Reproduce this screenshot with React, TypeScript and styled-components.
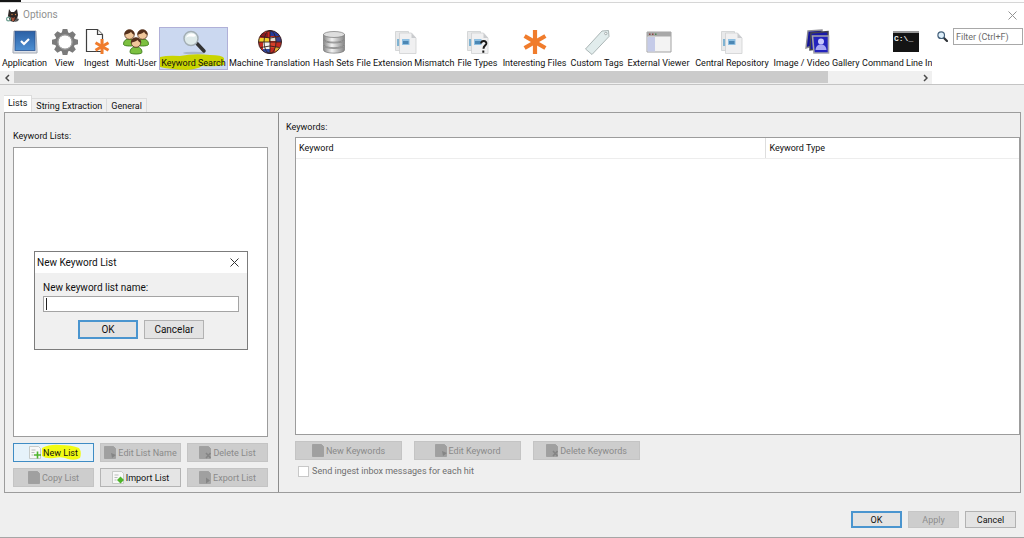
import React from "react";
import styled, { createGlobalStyle, css } from "styled-components";

const Global = createGlobalStyle`
  *, *::before, *::after { box-sizing: border-box; }
  body { margin: 0; background: #efefef; }
  body, button, input, table {
    font-family: Roboto, Tahoma, sans-serif;
    font-size: 9px;
    line-height: 12px;
    color: #111;
  }
  button { padding: 0; }
`;

const Window = styled.div`
  display: flex;
  flex-direction: column;
  min-height: 100vh;
  background: #efefef;
  border-bottom: 1px solid #a6a6a6;
`;

/* ---------- title bar ---------- */

const TopEdge = styled.div`
  display: flex;
  height: 3px;
  background: #fdfdfd;
  border-bottom: 1px solid #d6d6d6;
`;
const TopEdgeDark = styled.span`
  width: 21px;
  height: 2px;
  background: #151515;
`;
const TitleBar = styled.header`
  display: flex;
  align-items: center;
  height: 24px;
  padding: 0 6px;
  background: #fff;
`;
const Title = styled.h1`
  flex: 1;
  margin: 0 0 0 4px;
  font-size: 10px;
  font-weight: 400;
  color: #909090;
`;
const CloseButton = styled.button<{ $strong?: boolean }>`
  display: grid;
  place-items: center;
  width: 11px;
  height: 11px;
  border: 0;
  background: none;
  color: ${(p) => (p.$strong ? "#333" : "#929292")};
`;

/* ---------- category toolbar ---------- */

const Toolbar = styled.div`
  display: flex;
  background: #fff;
  border-bottom: 1px solid #c4c4c4;
`;
const Scroller = styled.div`
  flex: 1;
  min-width: 0;
`;
const Categories = styled.nav`
  display: flex;
  height: 44px;
  overflow: hidden;
`;
const Category = styled.button<{ $width: number; $active?: boolean }>`
  position: relative;
  flex: none;
  display: flex;
  flex-direction: column;
  align-items: center;
  justify-content: space-between;
  width: ${(p) => p.$width}px;
  height: 43px;
  border: 1px solid ${(p) => (p.$active ? "#b0b0d8" : "transparent")};
  background: ${(p) => (p.$active ? "#cbd8f0" : "none")};
  white-space: nowrap;
  svg { flex: none; }
`;
const CategoryLabel = styled.span`
  position: relative;
`;
const Marker = styled.svg`
  position: absolute;
  left: 0;
  bottom: -1px;
`;
const ScrollBar = styled.div`
  display: flex;
  height: 13px;
  background: #f0f0f0;
`;
const ScrollArrow = styled.button`
  display: grid;
  place-items: center;
  width: 14px;
  height: 13px;
  border: 0;
  background: #f0f0f0;
  color: #4a4a4a;
`;
const ScrollTrack = styled.div`
  flex: 1;
`;
const ScrollThumb = styled.div`
  width: 90%;
  height: 12px;
  background: #cbcbcb;
`;
const Search = styled.label`
  display: flex;
  align-items: flex-start;
  gap: 5px;
  padding: 1px 1px 0 5px;
  svg { margin-top: 3px; }
`;
const FilterInput = styled.input`
  width: 70px;
  height: 17px;
  padding: 0 2px;
  border: 1px solid #a8a8a8;
  background: #fff;
  font-size: 9px;
  &::placeholder { color: #6c6c6c; opacity: 1; }
`;

/* ---------- tabs and panes ---------- */

const Body = styled.main`
  flex: 1;
  display: flex;
  flex-direction: column;
  padding: 10px 3px 0 4px;
`;
const Tabs = styled.div`
  display: flex;
  align-items: flex-end;
`;
const Tab = styled.button<{ $active?: boolean }>`
  height: 14px;
  padding: 0 4px;
  border: 1px solid #dcdcdc;
  border-width: 1px 1px 0 0;
  background: #f0f0f0;
  ${(p) =>
    p.$active &&
    css`
      height: 17px;
      padding-bottom: 3px;
      background: #fff;
    `}
`;
const Panes = styled.div`
  flex: 1;
  display: grid;
  grid-template-columns: minmax(0, 27fr) minmax(0, 73fr);
  border: 1px solid #9c9c9c;
`;
const ListsPane = styled.section`
  display: flex;
  flex-direction: column;
  padding: 17px 10px 5px 8px;
  border-right: 1px solid #8c8c8c;
`;
const PaneTitle = styled.h2`
  margin: 0;
  font-size: 9px;
  font-weight: 400;
`;
const ListBox = styled.div`
  position: relative;
  flex: 1;
  min-height: 200px;
  margin: 5px 0 6px;
  border: 1px solid #9c9c9c;
  background: #fff;
`;
const ListActions = styled.div`
  display: grid;
  grid-template-columns: repeat(3, minmax(0, 1fr));
  gap: 6px;
`;
const ActionButton = styled.button<{ $focus?: boolean }>`
  position: relative;
  display: flex;
  align-items: center;
  justify-content: center;
  gap: 2px;
  height: 19px;
  border: 1px solid #b4b4b4;
  background: #e5e5e5;
  white-space: nowrap;
  svg { flex: none; }
  &:disabled {
    border-color: #c4c4c4;
    background: #cdcdcd;
    color: #8a8a8a;
  }
  ${(p) =>
    p.$focus &&
    css`
      border-color: #3f8cc4;
      background: #e6f2fa;
    `}
`;
const ActionLabel = styled.span`
  position: relative;
`;
const ActionMarker = styled.svg`
  position: absolute;
  left: 27px;
  top: 0;
`;

const KeywordsPane = styled.section`
  display: flex;
  flex-direction: column;
  padding: 8px 0 15px 7px;
`;
const KeywordsContent = styled.div`
  flex: 1;
  display: flex;
  flex-direction: column;
  margin: 4px 0 0 9px;
`;
const TableFrame = styled.div`
  flex: 1;
  border: 1px solid #9c9c9c;
  background: #fff;
`;
const Table = styled.table`
  width: 100%;
  border-collapse: collapse;
  table-layout: fixed;
  th {
    height: 20px;
    padding: 0 3px;
    border-bottom: 1px solid #ededed;
    text-align: left;
    font-weight: 400;
  }
  th:first-child {
    width: 65%;
    border-right: 1px solid #dedede;
  }
`;
const KeywordActions = styled.div`
  display: grid;
  grid-template-columns: repeat(3, 107px);
  gap: 12px;
  margin: 6px 0 5px;
`;
const CheckRow = styled.label`
  display: flex;
  align-items: center;
  gap: 3px;
  padding-left: 3px;
  color: #6e6e6e;
`;
const CheckBox = styled.input`
  appearance: none;
  width: 11px;
  height: 11px;
  margin: 0;
  border: 1px solid #c8c8c8;
  background: #fff;
`;

/* ---------- footer ---------- */

const Footer = styled.footer`
  display: flex;
  justify-content: flex-end;
  gap: 6px;
  padding: 18px 8px 9px;
`;
const PushButton = styled.button<{ $default?: boolean; $large?: boolean }>`
  width: ${(p) => (p.$large ? 60 : 51)}px;
  height: ${(p) => (p.$large ? 19 : 17)}px;
  border: ${(p) => (p.$default ? "2px solid #4a95cf" : "1px solid #b2b2b2")};
  background: #e3e3e3;
  line-height: 10px;
  font-size: ${(p) => (p.$large ? 10 : 9)}px;
  &:disabled {
    border-color: #c6c6c6;
    background: #cdcdcd;
    color: #8e8e8e;
  }
`;

/* ---------- new list dialog ---------- */

const Dialog = styled.div`
  position: absolute;
  top: 103px;
  left: 20px;
  right: 19px;
  border: 1px solid #7c7c7c;
  background: #f0f0f0;
  font-size: 10px;
`;
const DialogTitle = styled.div`
  display: flex;
  align-items: center;
  justify-content: space-between;
  height: 21px;
  padding: 0 7px 0 2px;
  background: #fff;
`;
const DialogBody = styled.form`
  display: flex;
  flex-direction: column;
  padding: 9px 8px 10px;
`;
const NameInput = styled.input`
  width: 100%;
  height: 16px;
  margin-top: 2px;
  padding: 0 3px;
  border: 1px solid #a4a4a4;
  background: linear-gradient(#222, #222) 2px 1px / 1px 12px no-repeat #fff;
`;
const DialogActions = styled.div`
  display: flex;
  justify-content: center;
  gap: 6px;
  margin-top: 8px;
`;

/* ---------- icons ---------- */

const Cross = ({ size = 9 }: { size?: number }) => (
  <svg width={size} height={size} viewBox="0 0 9 9" stroke="currentColor" fill="none">
    <path d="M.5 .5l8 8M8.5 .5l-8 8" />
  </svg>
);

const Chevron = ({ right }: { right?: boolean }) => (
  <svg width="5" height="8" viewBox="0 0 5 8" fill="none" stroke="currentColor" strokeWidth="1.5">
    <path d={right ? "M1 1l3 3-3 3" : "M4 1L1 4l3 3"} />
  </svg>
);

const DogIcon = () => (
  <svg width="13" height="13" viewBox="0 0 13 13">
    <path d="M3 0l2 3h3l3-3 1 6-1 4-3 3-4-1-2-5z" fill="#2e2624" />
    <path d="M5 8l2 1 2-1-1 4H6z" fill="#a8543a" />
    <circle cx="6" cy="5.500" r=".7" fill="#d98a4b" />
    <circle cx="9.500" cy="5.500" r=".7" fill="#d98a4b" />
    <circle cx="2.500" cy="10" r="1.900" fill="none" stroke="#6f9f92" strokeWidth="1.200" />
    <path d="M10 9l3 1-1 2-3 1z" fill="#555" />
  </svg>
);

const iconBox = { width: 28, height: 28, viewBox: "0 0 28 28" };

const ApplicationIcon = () => (
  <svg {...iconBox}>
    <defs>
      <linearGradient id="app" x2="0" y2="1">
        <stop stopColor="#2c61a6" />
        <stop offset="1" stopColor="#4d8fd2" />
      </linearGradient>
    </defs>
    <path d="M3 3h22l1 19v3H2v-3z" fill="#dde1e8" stroke="#a3a9b4" />
    <rect x="4" y="3.500" width="20" height="19" fill="url(#app)" stroke="#2a5390" strokeWidth=".8" />
    <path d="M10 13l3 3 5-5" fill="none" stroke="#fff" strokeWidth="2.200" />
  </svg>
);

const GearIcon = () => (
  <svg {...iconBox}>
    <g fill="#7b7b7b">
      {[0, 45, 90, 135].map((a) => (
        <path key={a} transform={`rotate(${a} 14 14)`} d="M11.700 1h4.600l1 4v18l-1 4h-4.600l-1-4V5z" />
      ))}
      <circle cx="14" cy="14" r="10" />
    </g>
    <circle cx="14" cy="14" r="6.700" fill="#fff" />
    <circle cx="14" cy="14" r="7.200" fill="none" stroke="#a8a8a8" />
  </svg>
);

const Star = ({ x, y, r, w }: { x: number; y: number; r: number; w: number }) => (
  <g stroke="#f07c2c" strokeWidth={w} fill="none">
    {[0, 60, 120].map((a) => (
      <path key={a} transform={`rotate(${a} ${x} ${y})`} d={`M${x} ${y - r}V${y + r}`} />
    ))}
  </g>
);

const IngestIcon = () => (
  <svg {...iconBox}>
    <path d="M3.500 1.500h11l5 5v17h-16z" fill="#fdfdfd" stroke="#3f3f3f" strokeWidth="1.200" />
    <path d="M14.500 1.500v5h5" fill="#eee" stroke="#3f3f3f" strokeWidth="1.200" />
    <Star x={19} y={18.5} r={7.5} w={3} />
  </svg>
);

const Person = ({ x, y }: { x: number; y: number }) => (
  <g transform={`translate(${x} ${y})`}>
    <path d="M-6 10c0-4 2.500-5.500 6-5.500s6 1.500 6 5.500c-1 2-11 2-12 0z" fill="#7cc040" stroke="#3c7a1c" strokeWidth=".9" />
    <circle r="4.800" fill="#f0c79b" stroke="#54301c" strokeWidth=".8" />
    <path d="M-5 .5C-5.500-6.500 5.500-6.500 5 .5 3-.5 2-1.800 1.500-2.500 0-1-3-.5-5 .5z" fill="#54301c" />
  </g>
);

const UsersIcon = () => (
  <svg {...iconBox}>
    <Person x={7.5} y={6.5} />
    <Person x={20.5} y={6.5} />
    <Person x={14} y={14.5} />
  </svg>
);

const MagnifierIcon = () => (
  <svg {...iconBox}>
    <ellipse cx="14" cy="25" rx="11" ry="1.300" fill="#a8b5cc" />
    <path d="M17 15.500l7 7.500" stroke="#333" strokeWidth="3.500" strokeLinecap="round" />
    <circle cx="11" cy="10.500" r="7" fill="#dfeaea" stroke="#a3aeb4" strokeWidth="1.500" />
    <path d="M6 10c1-5 8-6 10-2-3 2-7-1-10 2z" fill="#fff" />
  </svg>
);

const GlobeIcon = () => (
  <svg {...iconBox}>
    <defs>
      <clipPath id="globe"><circle cx="14" cy="14" r="11.500" /></clipPath>
    </defs>
    <g clipPath="url(#globe)">
      <path d="M0 0h28v28H0z" fill="#c32a22" />
      <path d="M14 2h12v6H14z" fill="#253a9c" />
      <path d="M2 10h11v4H2z" fill="#f2cf2d" />
      <path d="M7 14h7v7H7z" fill="#f2f2f2" />
      <path d="M7 21h7v6H7z" fill="#2f4aa6" />
      <path d="M14 9h7v4h-7z" fill="#e8ddd0" />
      <path d="M20 9h7v5h-7z" fill="#39428a" />
      <path d="M14 14h6v6h-6z" fill="#d8402a" />
      <path d="M19 19h6v6h-6z" fill="#e0a834" />
      <path d="M3 5h9v4H3z" fill="#8c1c22" />
    </g>
    <g fill="none" stroke="#33211f" strokeWidth=".9">
      <circle cx="14" cy="14" r="11.500" />
      <ellipse cx="14" cy="14" rx="6" ry="11.500" />
      <path d="M14 2.500v23M2.500 14h23M4.500 8.500q9.500 3 19 0M4.500 19.500q9.500-3 19 0" />
    </g>
  </svg>
);

const DatabaseIcon = () => (
  <svg {...iconBox}>
    <defs>
      <linearGradient id="db">
        <stop stopColor="#888" />
        <stop offset=".4" stopColor="#f2f2f2" />
        <stop offset="1" stopColor="#868686" />
      </linearGradient>
    </defs>
    {[17.5, 12, 6.5].map((y) => (
      <g key={y} stroke="#777" strokeWidth=".7">
        <path d={`M3.500 ${y}v4.500c0 4.200 21 4.200 21 0V${y}z`} fill="url(#db)" />
        <ellipse cx="14" cy={y} rx="10.500" ry="3" fill="#dedede" />
      </g>
    ))}
  </svg>
);

const FilesIcon = ({ question }: { question?: boolean }) => (
  <svg {...iconBox}>
    <path d="M3.500 3.500h13v19h-13z" fill="#e8e9ea" stroke="#cdcfd1" strokeWidth=".8" />
    <path d="M5 11h3v7H5z" fill="#7fb3d2" />
    <path d="M7.500 5h12l4.500 5v15.500H7.500z" fill="#f0f0f1" stroke="#cfd0d2" strokeWidth=".8" />
    <path d="M19.500 5v5H24z" fill="#c9cbce" />
    <path d="M10 11h7.500v6H10z" fill="#8fc0e2" />
    <path d="M11 13h5.500v3H11z" fill="#4c87b4" />
    {question && (
      <path d="M17 15.500c.3-3.500 5.700-3.200 5.300.2-.3 2-2.800 2-2.800 5M19.300 22.500v2.300" fill="none" stroke="#181818" strokeWidth="2" />
    )}
  </svg>
);

const InterestingIcon = () => (
  <svg {...iconBox}>
    <Star x={14} y={14} r={12} w={4.2} />
  </svg>
);

const TagIcon = () => (
  <svg {...iconBox}>
    <path d="M19 3l6.500-.5.5 6L9 26.500 2.500 21z" fill="#e1ecec" stroke="#a3aeae" strokeWidth=".9" />
    <circle cx="22.800" cy="5.500" r="1.200" fill="#fff" stroke="#8a9292" strokeWidth=".7" />
  </svg>
);

const ViewerIcon = () => (
  <svg {...iconBox}>
    <path d="M2 4h24v20H2z" fill="#f3f3f3" stroke="#a2a2a2" />
    <path d="M2 4h24v4.500H2z" fill="#a8a8a8" />
    <path d="M4 5.500h1.500v1.500H4zM7 5.500h1.500v1.500H7z" fill="#8b4444" />
    <path d="M10 5.500h1.500v1.500H10z" fill="#4c8650" />
    <path d="M2.500 9H10v14.500H2.500z" fill="#c5cbe8" />
  </svg>
);

const GalleryIcon = () => (
  <svg {...iconBox}>
    <path d="M5 3l14-1v13L3 20z" fill="#15159a" stroke="#8d8d93" strokeWidth="1.400" />
    <path d="M8 5l17-1.500v16L7 22z" fill="#1a1aa8" stroke="#44444c" strokeWidth="1.500" />
    <path d="M9.500 8h16v17H11z" fill="#2323bd" stroke="#a4a4aa" strokeWidth="1.600" />
    <circle cx="18" cy="13.500" r="3" fill="#c9c9fb" />
    <path d="M12.500 22c.5-4 2.500-5.500 5.500-5.500s5 1.500 5.500 5.500z" fill="#a9a9f4" />
  </svg>
);

const TerminalGlyph = styled.span`
  width: 26px;
  height: 21px;
  margin-top: 3px;
  padding: 2px 1px 0;
  border-top: 2px solid #9a9a9a;
  background: #141414;
  color: #eee;
  font: 700 8px/8px "Liberation Mono", monospace;
  text-align: left;
`;

const SearchIcon = () => (
  <svg width="11" height="11" viewBox="0 0 11 11">
    <path d="M6.500 6.500l3.500 3.500" stroke="#2f3338" strokeWidth="2.200" strokeLinecap="round" />
    <circle cx="4.200" cy="4.200" r="3.300" fill="#dff0fb" stroke="#46627c" strokeWidth="1.200" />
  </svg>
);

type DocKind = "plain" | "add" | "edit" | "remove" | "import" | "export";

const DocIcon = ({ kind, disabled }: { kind: DocKind; disabled?: boolean }) => {
  const ink = disabled ? "#858585" : "#4fb52c";
  return (
    <svg width="12" height="13" viewBox="0 0 12 13">
      <path d="M.5 .5h9l2 2v10H.5z" fill={disabled ? "#a0a0a0" : "#f8f8f8"} stroke={disabled ? "#9c9c9c" : "#bcc0bc"} strokeWidth=".8" />
      {!disabled && <path d="M2.500 4h4M2.500 6.500h3M2.500 9h2" stroke="#b9bdb9" />}
      {kind === "add" && <path d="M8.500 5.500v7M5 9h7" stroke={ink} strokeWidth="1.600" />}
      {kind === "edit" && <path d="M7 7l5 2-4 3z" fill={ink} />}
      {kind === "remove" && <path d="M7 7l4.500 5M11.500 7L7 12" stroke={ink} strokeWidth="1.600" />}
      {kind === "import" && <path d="M8.500 5.500l3.500 3.500-3.500 3.500L5 9z" fill={ink} />}
      {kind === "export" && <path d="M7 6.500l4 3-4 3z" fill={ink} />}
    </svg>
  );
};

/* ---------- data ---------- */

const categories: { label: string; width: number; icon: React.ReactNode; active?: boolean }[] = [
  { label: "Application", width: 49, icon: <ApplicationIcon /> },
  { label: "View", width: 31, icon: <GearIcon /> },
  { label: "Ingest", width: 33, icon: <IngestIcon /> },
  { label: "Multi-User", width: 46, icon: <UsersIcon /> },
  { label: "Keyword Search", width: 69, icon: <MagnifierIcon />, active: true },
  { label: "Machine Translation", width: 83, icon: <GlobeIcon /> },
  { label: "Hash Sets", width: 45, icon: <DatabaseIcon /> },
  { label: "File Extension Mismatch", width: 99, icon: <FilesIcon /> },
  { label: "File Types", width: 45, icon: <FilesIcon question /> },
  { label: "Interesting Files", width: 69, icon: <InterestingIcon /> },
  { label: "Custom Tags", width: 56, icon: <TagIcon /> },
  { label: "External Viewer", width: 67, icon: <ViewerIcon /> },
  { label: "Central Repository", width: 80, icon: <FilesIcon /> },
  { label: "Image / Video Gallery", width: 89, icon: <GalleryIcon /> },
  { label: "Command Line Ingest", width: 90, icon: <TerminalGlyph>C:\_</TerminalGlyph> },
];

const listActions: { label: string; kind: DocKind; enabled?: boolean; focus?: boolean }[] = [
  { label: "New List", kind: "add", enabled: true, focus: true },
  { label: "Edit List Name", kind: "edit" },
  { label: "Delete List", kind: "remove" },
  { label: "Copy List", kind: "plain" },
  { label: "Import List", kind: "import", enabled: true },
  { label: "Export List", kind: "export" },
];

const keywordActions: { label: string; kind: DocKind }[] = [
  { label: "New Keywords", kind: "plain" },
  { label: "Edit Keyword", kind: "edit" },
  { label: "Delete Keywords", kind: "remove" },
];

export default function App() {
  return (
    <Window>
      <Global />
      <TopEdge>
        <TopEdgeDark />
      </TopEdge>
      <TitleBar>
        <DogIcon />
        <Title>Options</Title>
        <CloseButton aria-label="Close">
          <Cross />
        </CloseButton>
      </TitleBar>

      <Toolbar>
        <Scroller>
          <Categories>
            {categories.map((c) => (
              <Category key={c.label} $width={c.width} $active={c.active}>
                {c.active && (
                  <Marker width="67" height="16" viewBox="0 0 67 16">
                    <path d="M0 3q8-2 20-1 14-3 30-1 12 0 14 3v7q-8 2-22 1-4 3-16 4-18-1-26-3z" fill="#c9d400" />
                  </Marker>
                )}
                {c.icon}
                <CategoryLabel>{c.label}</CategoryLabel>
              </Category>
            ))}
          </Categories>
          <ScrollBar>
            <ScrollArrow aria-label="Scroll left">
              <Chevron />
            </ScrollArrow>
            <ScrollTrack>
              <ScrollThumb />
            </ScrollTrack>
            <ScrollArrow aria-label="Scroll right">
              <Chevron right />
            </ScrollArrow>
          </ScrollBar>
        </Scroller>
        <Search>
          <SearchIcon />
          <FilterInput aria-label="Filter" placeholder="Filter (Ctrl+F)" />
        </Search>
      </Toolbar>

      <Body>
        <Tabs role="tablist">
          <Tab role="tab" aria-selected="true" $active>
            Lists
          </Tab>
          <Tab role="tab">String Extraction</Tab>
          <Tab role="tab">General</Tab>
        </Tabs>
        <Panes>
          <ListsPane>
            <PaneTitle>Keyword Lists:</PaneTitle>
            <ListBox>
              <Dialog role="dialog" aria-label="New Keyword List">
                <DialogTitle>
                  New Keyword List
                  <CloseButton aria-label="Close dialog" $strong>
                    <Cross />
                  </CloseButton>
                </DialogTitle>
                <DialogBody onSubmit={(e) => e.preventDefault()}>
                  <label htmlFor="list-name">New keyword list name:</label>
                  <NameInput id="list-name" type="text" />
                  <DialogActions>
                    <PushButton $default $large>
                      OK
                    </PushButton>
                    <PushButton type="button" $large>
                      Cancelar
                    </PushButton>
                  </DialogActions>
                </DialogBody>
              </Dialog>
            </ListBox>
            <ListActions>
              {listActions.map((a) => (
                <ActionButton key={a.label} disabled={!a.enabled} $focus={a.focus}>
                  {a.focus && (
                    <ActionMarker width="40" height="17" viewBox="0 0 40 17">
                      <path d="M1 4q8-4 18-3 12 0 19 3 3 4 1 10-5 3-12 1-6-3-14-1-8 1-12-2z" fill="#f2fb12" />
                    </ActionMarker>
                  )}
                  <DocIcon kind={a.kind} disabled={!a.enabled} />
                  <ActionLabel>{a.label}</ActionLabel>
                </ActionButton>
              ))}
            </ListActions>
          </ListsPane>
          <KeywordsPane>
            <PaneTitle>Keywords:</PaneTitle>
            <KeywordsContent>
              <TableFrame>
                <Table>
                  <thead>
                    <tr>
                      <th scope="col">Keyword</th>
                      <th scope="col">Keyword Type</th>
                    </tr>
                  </thead>
                </Table>
              </TableFrame>
              <KeywordActions>
                {keywordActions.map((a) => (
                  <ActionButton key={a.label} disabled>
                    <DocIcon kind={a.kind} disabled />
                    {a.label}
                  </ActionButton>
                ))}
              </KeywordActions>
              <CheckRow>
                <CheckBox type="checkbox" disabled />
                Send ingest inbox messages for each hit
              </CheckRow>
            </KeywordsContent>
          </KeywordsPane>
        </Panes>
      </Body>

      <Footer>
        <PushButton $default>OK</PushButton>
        <PushButton disabled>Apply</PushButton>
        <PushButton>Cancel</PushButton>
      </Footer>
    </Window>
  );
}
